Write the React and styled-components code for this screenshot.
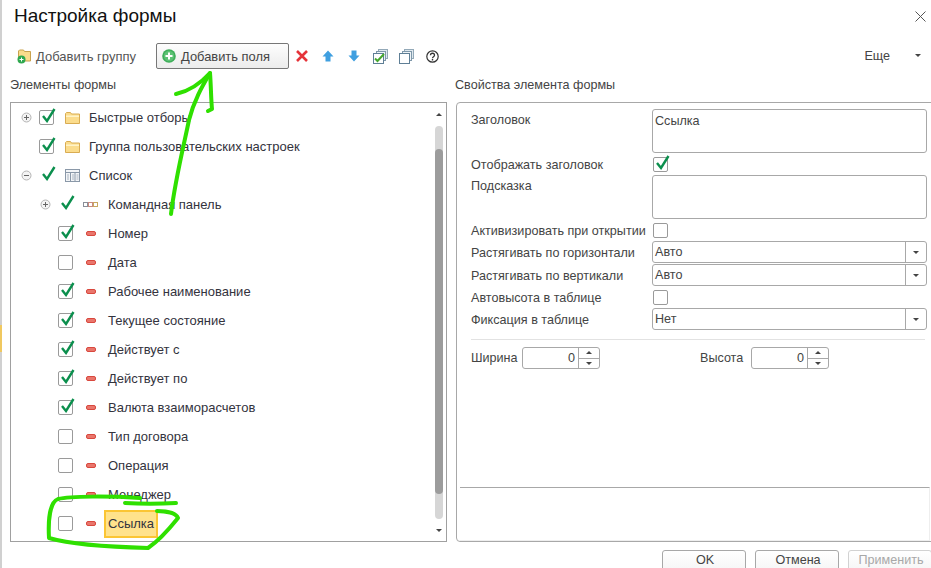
import styled, { createGlobalStyle } from 'styled-components'

const GlobalStyle = createGlobalStyle`
    html, body {
        margin: 0;
        padding: 0;
        background: #ffffff;
    }
    body {
        font-family: "Liberation Sans", Arial, sans-serif;
        font-size: 12.6px;
        color: #2b2b33;
    }
`

const treeItems = [
    { title: 'Быстрые отборы', level: 0, toggle: 'plus', mark: 'box', icon: 'folder' },
    { title: 'Группа пользовательских настроек', level: 0, mark: 'box', icon: 'folder' },
    { title: 'Список', level: 0, toggle: 'minus', mark: 'check', icon: 'table' },
    { title: 'Командная панель', level: 1, toggle: 'plus', mark: 'check', icon: 'panel' },
    { title: 'Номер', level: 1, mark: 'box', icon: 'field' },
    { title: 'Дата', level: 1, mark: 'empty', icon: 'field' },
    { title: 'Рабочее наименование', level: 1, mark: 'box', icon: 'field' },
    { title: 'Текущее состояние', level: 1, mark: 'box', icon: 'field' },
    { title: 'Действует с', level: 1, mark: 'box', icon: 'field' },
    { title: 'Действует по', level: 1, mark: 'box', icon: 'field' },
    { title: 'Валюта взаиморасчетов', level: 1, mark: 'box', icon: 'field' },
    { title: 'Тип договора', level: 1, mark: 'empty', icon: 'field' },
    { title: 'Операция', level: 1, mark: 'empty', icon: 'field' },
    { title: 'Менеджер', level: 1, mark: 'empty', icon: 'field' },
    { title: 'Ссылка', level: 1, mark: 'empty', icon: 'field', selected: true },
]

function CheckGlyph() {
    return (
        <CheckSvg viewBox="0 0 14 15" width="14" height="15">
            <path d="M1 8 L5 13 L12.5 1" fill="none" stroke="#0b8f4d" strokeWidth="2.4" />
        </CheckSvg>
    )
}

function ItemIcon({ type }) {
    if (type === 'folder') {
        return (
            <svg viewBox="0 0 15 12" width="15" height="12">
                <path d="M.5 11.5V1.5l1-1h4l1 1.5h8v9.500z" fill="#fbdc8c" stroke="#d9ac52" />
                <rect x="1" y="3.500" width="13" height="1.500" fill="#fff3c8" />
            </svg>
        )
    }
    if (type === 'table') {
        return (
            <svg viewBox="0 0 15 13" width="15" height="13" fill="none" stroke="#8a98a8">
                <rect x=".5" y=".5" width="14" height="12" fill="#f3f5f7" />
                <path d="M.5 3.500h14M5.500 3.500v9M10 3.500v9" />
                <path d="M2 6h2M2 8h2M2 10h2M7 6h2M7 8h2M7 10h2M11.500 6h2M11.500 8h2M11.500 10h2" stroke="#aab4c0" />
            </svg>
        )
    }
    if (type === 'panel') {
        return (
            <svg viewBox="0 0 16 6" width="16" height="6" fill="#fff" strokeWidth="1">
                <rect x=".5" y=".5" width="4" height="4" stroke="#8a8f98" />
                <rect x="5.500" y=".5" width="4" height="4" stroke="#c98a80" />
                <rect x="10.500" y=".5" width="4" height="4" stroke="#c8a860" />
            </svg>
        )
    }
    return <FieldDash />
}

function TreeToggle({ type }) {
    return (
        <svg viewBox="0 0 11 11" width="11" height="11" fill="none" stroke="#9a9a9a">
            <circle cx="5.500" cy="5.500" r="4.500" fill="#f4f4f4" stroke="#b4b4b4" />
            <path d="M3 5.500h5" stroke="#666" />
            {type === 'plus' && <path d="M5.500 3v5" stroke="#666" />}
        </svg>
    )
}

function TreeRow({ item }) {
    return (
        <Row $level={item.level}>
            <ToggleSlot>{item.toggle && <TreeToggle type={item.toggle} />}</ToggleSlot>
            <MarkSlot>
                {item.mark !== 'check' && <Box />}
                {item.mark !== 'empty' && <CheckGlyph />}
            </MarkSlot>
            <IconSlot>
                <ItemIcon type={item.icon} />
            </IconSlot>
            <RowLabel $selected={item.selected}>{item.title}</RowLabel>
        </Row>
    )
}

function Checkbox({ checked }) {
    return (
        <MarkSlot>
            <Box />
            {checked && <CheckGlyph />}
        </MarkSlot>
    )
}

function Select({ value }) {
    return (
        <SelectBox>
            <SelectValue>{value}</SelectValue>
            <SelectArrow>
                <Caret />
            </SelectArrow>
        </SelectBox>
    )
}

function Spinner() {
    return (
        <SpinnerBox>
            <SpinnerValue>0</SpinnerValue>
            <SpinnerButtons>
                <SpinnerButton><CaretUp /></SpinnerButton>
                <SpinnerButton><Caret /></SpinnerButton>
            </SpinnerButtons>
        </SpinnerBox>
    )
}

export default function App() {
    return (
        <Page>
            <GlobalStyle />
            <TitleBar>
                <Title>Настройка формы</Title>
                <svg viewBox="0 0 11 11" width="11" height="11">
                    <path d="M.5.5l10 10M10.500.5l-10 10" stroke="#555" fill="none" />
                </svg>
            </TitleBar>

            <Toolbar>
                <AddGroup>
                    <svg viewBox="0 0 15 16" width="15" height="16">
                        <path d="M1.500 13V3l1-1h4l1 1.500h6V13z" fill="#fbdc8c" stroke="#c9a24e" />
                        <circle cx="4.500" cy="11.500" r="4" fill="#2fa84f" />
                        <path d="M2.500 11.500h4M4.500 9.500v4" stroke="#fff" />
                    </svg>
                    Добавить группу
                </AddGroup>
                <AddFields>
                    <svg viewBox="0 0 14 14" width="14" height="14">
                        <circle cx="7" cy="7" r="6.800" fill="#3fae5a" />
                        <circle cx="7" cy="7" r="5.200" fill="#5cc274" />
                        <path d="M3.500 7h7M7 3.500v7" stroke="#fff" strokeWidth="2" />
                    </svg>
                    Добавить поля
                </AddFields>
                <ToolIcons>
                    <ToolIcon>
                        <svg viewBox="0 0 12 12" width="12" height="12">
                            <path d="M1 1l10 10M11 1L1 11" stroke="#e5343a" strokeWidth="2.600" fill="none" />
                        </svg>
                    </ToolIcon>
                    <ToolIcon>
                        <svg viewBox="0 0 12 12" width="12" height="12">
                            <path d="M6 .5L11.500 6.500H8.500V11.500H3.500V6.500H.5z" fill="#3f9fe0" />
                        </svg>
                    </ToolIcon>
                    <ToolIcon>
                        <svg viewBox="0 0 12 12" width="12" height="12">
                            <path d="M6 11.500L11.500 5.500H8.500V.5H3.500V5.500H.5z" fill="#3f9fe0" />
                        </svg>
                    </ToolIcon>
                    <ToolIcon>
                        <svg viewBox="0 0 15 15" width="15" height="15" fill="#fff">
                            <rect x="5.500" y=".5" width="9" height="9" fill="#dfe8ee" stroke="#93a9b8" />
                            <rect x="3.500" y="2.500" width="9" height="9" fill="#eef3f6" stroke="#7f98aa" />
                            <rect x=".5" y="4.500" width="10" height="10" stroke="#5f7f96" />
                            <path d="M2 9.500l2.500 2.500L11 5" fill="none" stroke="#46a82e" strokeWidth="2" />
                        </svg>
                    </ToolIcon>
                    <ToolIcon>
                        <svg viewBox="0 0 15 15" width="15" height="15" fill="#fff">
                            <rect x="5.500" y=".5" width="9" height="9" fill="#dfe8ee" stroke="#93a9b8" />
                            <rect x="3.500" y="2.500" width="9" height="9" fill="#eef3f6" stroke="#7f98aa" />
                            <rect x=".5" y="4.500" width="10" height="10" stroke="#5f7f96" />
                        </svg>
                    </ToolIcon>
                    <ToolIcon>
                        <svg viewBox="0 0 13 13" width="13" height="13">
                            <circle cx="6.500" cy="6.500" r="5.700" fill="#fff" stroke="#333" strokeWidth="1.200" />
                            <path d="M4.500 5.200c0-2.600 4-2.600 4 0 0 1.500-2 1.500-2 3" fill="none" stroke="#333" strokeWidth="1.300" />
                            <rect x="5.800" y="9" width="1.400" height="1.500" fill="#333" />
                        </svg>
                    </ToolIcon>
                </ToolIcons>
                <More>Еще</More>
                <MoreCaret />
            </Toolbar>

            <Columns>
                <LeftColumn>
                    <SectionTitle>Элементы формы</SectionTitle>
                    <TreePanel>
                        <TreeList>
                            {treeItems.map((item) => (
                                <TreeRow key={item.title} item={item} />
                            ))}
                        </TreeList>
                        <Scrollbar>
                            <CaretUp />
                            <Track>
                                <Thumb />
                            </Track>
                            <Caret />
                        </Scrollbar>
                    </TreePanel>
                </LeftColumn>

                <RightColumn>
                    <RightTitle>Свойства элемента формы</RightTitle>
                    <PropsPanel>
                        <FormGrid>
                            <FieldLabel $top>Заголовок</FieldLabel>
                            <TextArea>Ссылка</TextArea>
                            <FieldLabel>Отображать заголовок</FieldLabel>
                            <CheckRow><Checkbox checked /></CheckRow>
                            <FieldLabel $top>Подсказка</FieldLabel>
                            <TextArea />
                            <FieldLabel>Активизировать при открытии</FieldLabel>
                            <CheckRow><Checkbox /></CheckRow>
                            <FieldLabel>Растягивать по горизонтали</FieldLabel>
                            <Select value="Авто" />
                            <FieldLabel>Растягивать по вертикали</FieldLabel>
                            <Select value="Авто" />
                            <FieldLabel>Автовысота в таблице</FieldLabel>
                            <CheckRow><Checkbox /></CheckRow>
                            <FieldLabel>Фиксация в таблице</FieldLabel>
                            <Select value="Нет" />
                        </FormGrid>
                        <Separator />
                        <SizeRow>
                            <SizeField $first>
                                <SizeLabel>Ширина</SizeLabel>
                                <Spinner />
                            </SizeField>
                            <SizeField>
                                <SizeLabel>Высота</SizeLabel>
                                <Spinner />
                            </SizeField>
                        </SizeRow>
                        <BottomBox />
                    </PropsPanel>
                </RightColumn>
            </Columns>

            <Footer>
                <FooterButton>OK</FooterButton>
                <FooterButton>Отмена</FooterButton>
                <FooterButton $disabled>Применить</FooterButton>
            </Footer>

            <Scribble viewBox="0 0 931 568" width="931" height="568">
                <g fill="none" stroke="#2fe000" strokeWidth="4" strokeLinecap="round" strokeLinejoin="round">
                    <path d="M171 214 C175 180 185 140 189 120 C194 100 203 85 210 73" />
                    <path d="M176 94 C190 91 200 84 210 73 C211 85 211 100 212 109 L208 111" />
                    <path d="M125 503 C140 504 160 504 176 503" />
                    <path d="M140 498 C110 496 70 496 58 499 C50 502 48 520 49 538 C70 544 110 547 148 548 C160 540 170 528 178 518 C176 513 166 511 157 511" />
                </g>
            </Scribble>
        </Page>
    )
}

const Page = styled.div`
    position: relative;
    width: 931px;
    height: 568px;
    overflow: hidden;
    box-sizing: border-box;
    padding-left: 1px;
    background: #ffffff;
    box-shadow: inset 2px 0 #d0d0d0;
    &::before {
        content: '';
        position: absolute;
        left: 0;
        top: 325px;
        width: 2px;
        height: 27px;
        background: #f0c860;
    }
`
const TitleBar = styled.div`
    display: flex;
    justify-content: space-between;
    align-items: center;
    height: 32px;
    padding: 0 5px 0 13px;
`
const Title = styled.h1`
    margin: 0;
    font-size: 19px;
    font-weight: normal;
    color: #111111;
`
const Toolbar = styled.div`
    display: flex;
    align-items: center;
    height: 26px;
    margin-top: 11px;
    padding-left: 16px;
`
const AddGroup = styled.div`
    display: flex;
    align-items: center;
    gap: 4px;
    flex: none;
    width: 139px;
    font-size: 13px;
    color: #555555;
`
const AddFields = styled.div`
    display: flex;
    align-items: center;
    gap: 5px;
    flex: none;
    box-sizing: border-box;
    width: 133px;
    height: 26px;
    padding-left: 5px;
    border: 1px solid #777777;
    border-radius: 2px;
    background: linear-gradient(#fdfdfd, #ececec);
    font-size: 12.9px;
    color: #444444;
`
const ToolIcons = styled.div`
    display: flex;
    align-items: center;
`
const ToolIcon = styled.div`
    display: flex;
    justify-content: center;
    width: 26px;
`
const More = styled.div`
    margin-left: auto;
    color: #444444;
`
const Caret = styled.span`
    display: block;
    width: 0;
    height: 0;
    border-left: 3px solid transparent;
    border-right: 3px solid transparent;
    border-top: 3px solid #444444;
`
const CaretUp = styled.span`
    display: block;
    width: 0;
    height: 0;
    border-left: 3px solid transparent;
    border-right: 3px solid transparent;
    border-bottom: 3px solid #444444;
`
const MoreCaret = styled(Caret)`
    margin: 0 10px 2px 25px;
`
const Columns = styled.div`
    display: flex;
    margin-top: 8px;
    padding-left: 9px;
`
const LeftColumn = styled.div`
    flex: none;
    width: 437px;
    margin-right: 9px;
`
const RightColumn = styled.div`
    flex: none;
    width: 490px;
`
const SectionTitle = styled.div`
    height: 25px;
    line-height: 17px;
    color: #444444;
    white-space: nowrap;
`
const RightTitle = styled(SectionTitle)`
    margin-left: -1px;
`
const TreePanel = styled.div`
    display: flex;
    box-sizing: border-box;
    height: 440px;
    border: 1px solid #a0a0a0;
`
const TreeList = styled.div`
    flex: 1;
    min-width: 0;
`
const Row = styled.div`
    display: flex;
    align-items: center;
    height: 29px;
    padding-left: ${(p) => 10 + p.$level * 19}px;
`
const ToggleSlot = styled.div`
    display: flex;
    width: 11px;
    margin-right: 7px;
`
const MarkSlot = styled.div`
    position: relative;
    flex: none;
    width: 15px;
    height: 15px;
`
const Box = styled.div`
    box-sizing: border-box;
    width: 15px;
    height: 15px;
    border: 1px solid #9a9a9a;
    border-radius: 2px;
    background: #ffffff;
`
const CheckSvg = styled.svg`
    position: absolute;
    left: 3px;
    top: -2px;
`
const IconSlot = styled.div`
    display: flex;
    align-items: center;
    justify-content: center;
    width: 16px;
    margin: 0 5px 0 10px;
`
const FieldDash = styled.div`
    box-sizing: border-box;
    width: 10px;
    height: 5px;
    border: 1px solid #d9483e;
    border-radius: 2px;
    background: #e9766c;
`
const RowLabel = styled.div`
    box-sizing: border-box;
    padding: 0 2px;
    height: 28px;
    font-size: 13px;
    line-height: 24px;
    border: 2px solid ${(p) => (p.$selected ? '#fbc534' : 'transparent')};
    background: ${(p) => (p.$selected ? '#ffe28c' : 'transparent')};
    color: #33333d;
    white-space: nowrap;
`
const Scrollbar = styled.div`
    display: flex;
    flex-direction: column;
    align-items: center;
    flex: none;
    box-sizing: border-box;
    width: 8px;
    margin-right: 3px;
    padding: 10px 0 9px;
`
const Track = styled.div`
    flex: 1;
    width: 8px;
    margin: 10px 0;
    padding: 23px 0 25px;
    border-radius: 4px;
    box-sizing: border-box;
    background: #d6d6d6;
`
const Thumb = styled.div`
    height: 100%;
    border-radius: 4px;
    background: #9c9c9c;
`
const PropsPanel = styled.div`
    box-sizing: border-box;
    height: 440px;
    padding: 6px 14px 0;
    border: 1px solid #a8a8a8;
    border-radius: 4px 0 0 4px;
`
const FormGrid = styled.div`
    display: grid;
    grid-template-columns: 181px 275px;
    grid-template-rows: 44px 20px 44px 20px 22px 22px 20px 22px;
    row-gap: 1px;
`
const FieldLabel = styled.div`
    display: flex;
    align-items: ${(p) => (p.$top ? 'flex-start' : 'center')};
    padding-top: ${(p) => (p.$top ? 4 : 1)}px;
    line-height: 14px;
    color: #444444;
    white-space: nowrap;
`
const TextArea = styled.div`
    box-sizing: border-box;
    padding: 4px 2px;
    line-height: 14px;
    border: 1px solid #a8a8a8;
    border-radius: 3px;
    color: #444444;
`
const CheckRow = styled.div`
    display: flex;
    align-items: center;
    padding-left: 1px;
`
const SelectBox = styled.div`
    display: flex;
    box-sizing: border-box;
    border: 1px solid #a8a8a8;
    border-radius: 3px;
`
const SelectValue = styled.div`
    flex: 1;
    padding-left: 2px;
    line-height: 21px;
    color: #444444;
`
const SelectArrow = styled.div`
    display: flex;
    align-items: center;
    justify-content: center;
    width: 20px;
    border-left: 1px solid #a8a8a8;
`
const Separator = styled.div`
    width: 454px;
    height: 1px;
    margin-top: 9px;
    background: #e2e2e2;
`
const SizeRow = styled.div`
    display: flex;
    margin-top: 7px;
`
const SizeField = styled.div`
    display: flex;
    align-items: center;
    width: ${(p) => (p.$first ? '229px' : 'auto')};
    color: #444444;
`
const SizeLabel = styled.span`
    width: 51px;
    white-space: nowrap;
`
const SpinnerBox = styled.div`
    display: flex;
    box-sizing: border-box;
    width: 78px;
    height: 22px;
    border: 1px solid #a8a8a8;
    border-radius: 3px;
`
const SpinnerValue = styled.div`
    flex: 1;
    padding-right: 3px;
    line-height: 21px;
    text-align: right;
`
const SpinnerButtons = styled.div`
    display: flex;
    flex-direction: column;
    width: 20px;
    border-left: 1px solid #a8a8a8;
`
const SpinnerButton = styled.div`
    display: flex;
    align-items: center;
    justify-content: center;
    flex: 1;
    & + & {
        border-top: 1px solid #a8a8a8;
    }
`
const BottomBox = styled.div`
    height: 52px;
    width: 469px;
    margin: 118px 0 0 -11px;
    border-top: 1px solid #a8a8a8;
    border-right: 1px solid #eeeeee;
    border-bottom: 1px solid #eeeeee;
`
const Footer = styled.div`
    display: flex;
    gap: 9px;
    margin-top: 8px;
    padding-left: 661px;
`
const FooterButton = styled.div`
    flex: none;
    box-sizing: border-box;
    width: 84px;
    height: 30px;
    padding: 2px 0 0 2px;
    border: 1px solid ${(p) => (p.$disabled ? '#d2d2d2' : '#a8a8a8')};
    border-radius: 3px;
    background: linear-gradient(#ffffff, #f2f2f2);
    color: ${(p) => (p.$disabled ? '#a8a8a8' : '#444444')};
    text-align: center;
`
const Scribble = styled.svg`
    position: absolute;
    left: 0;
    top: 0;
    pointer-events: none;
`
